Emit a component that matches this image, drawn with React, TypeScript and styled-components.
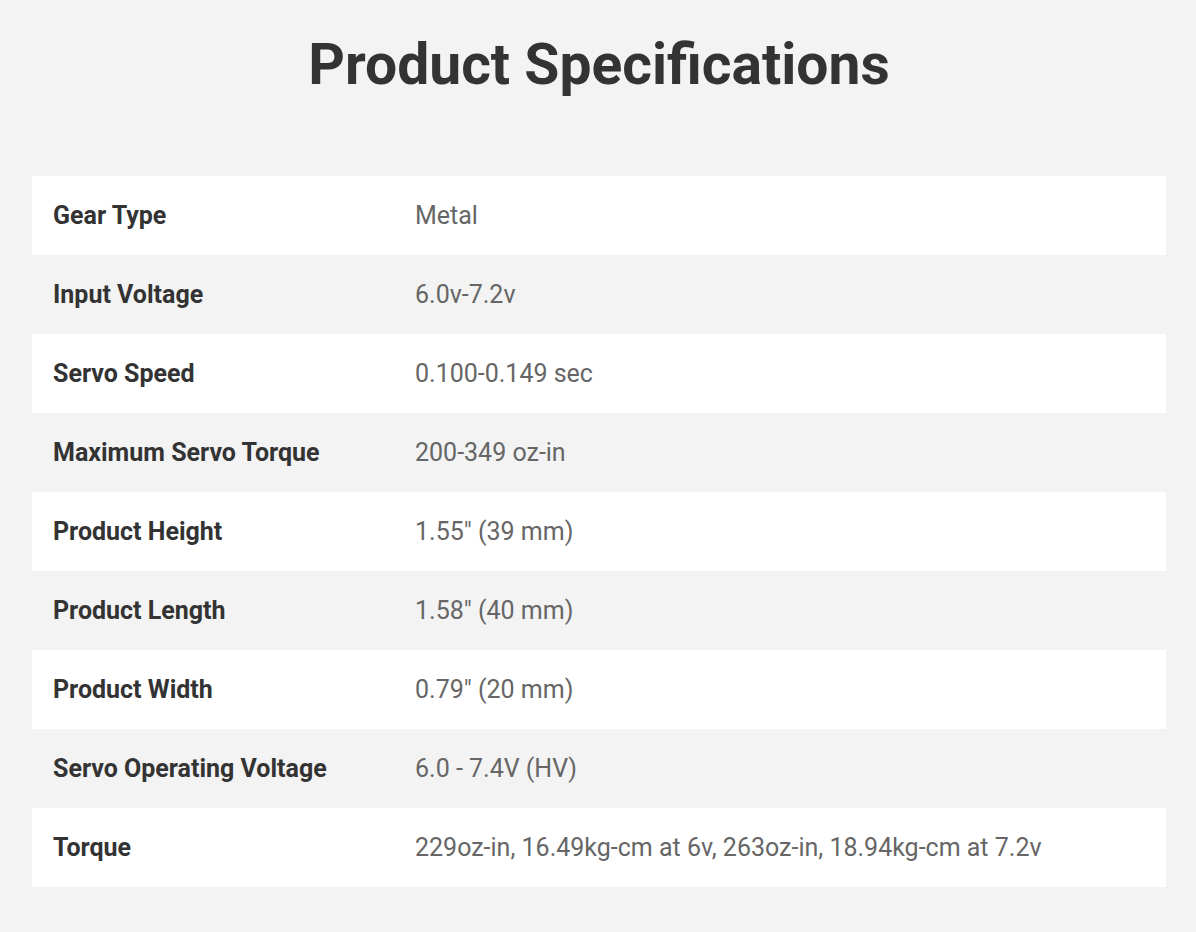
import styled, { createGlobalStyle } from "styled-components"

const specs: [string, string][] = [
    ["Gear Type", "Metal"],
    ["Input Voltage", "6.0v-7.2v"],
    ["Servo Speed", "0.100-0.149 sec"],
    ["Maximum Servo Torque", "200-349 oz-in"],
    ["Product Height", "1.55\" (39 mm)"],
    ["Product Length", "1.58\" (40 mm)"],
    ["Product Width", "0.79\" (20 mm)"],
    ["Servo Operating Voltage", "6.0 - 7.4V (HV)"],
    ["Torque", "229oz-in, 16.49kg-cm at 6v, 263oz-in, 18.94kg-cm at 7.2v"],
]

const App = () => {
    return (
        <Page>
            <GlobalStyle />
            <Title>Product Specifications</Title>
            <SpecTable>
                <tbody>
                    {specs.map(([label, value], i) => (
                        <Row key={label} $striped={i % 2 === 0}>
                            <Label>{label}</Label>
                            <Value>{value}</Value>
                        </Row>
                    ))}
                </tbody>
            </SpecTable>
        </Page>
    )
}

const GlobalStyle = createGlobalStyle`
    html, body {
        margin: 0;
        padding: 0;
        background: #f3f3f3;
        font-family: Roboto, "Liberation Sans", sans-serif;
    }
`

const Page = styled.div`
    padding: 29px 30px 44px 32px;
`

const Title = styled.h1`
    margin: 0 0 75px;
    text-align: center;
    font-size: 57px;
    line-height: 72px;
    font-weight: 700;
    color: #333;
`

const SpecTable = styled.table`
    width: 1134px;
    border-collapse: collapse;
    table-layout: fixed;
`

const Row = styled.tr<{ $striped: boolean }>`
    background: ${p => (p.$striped ? "#fff" : "transparent")};
`

const Label = styled.td`
    width: 320px;
    padding: 22px 21px;
    font-size: 25px;
    line-height: 35px;
    font-weight: 700;
    color: #333;
`

const Value = styled.td`
    padding: 22px 21px;
    font-size: 25px;
    line-height: 35px;
    color: #666;
`

export default App
